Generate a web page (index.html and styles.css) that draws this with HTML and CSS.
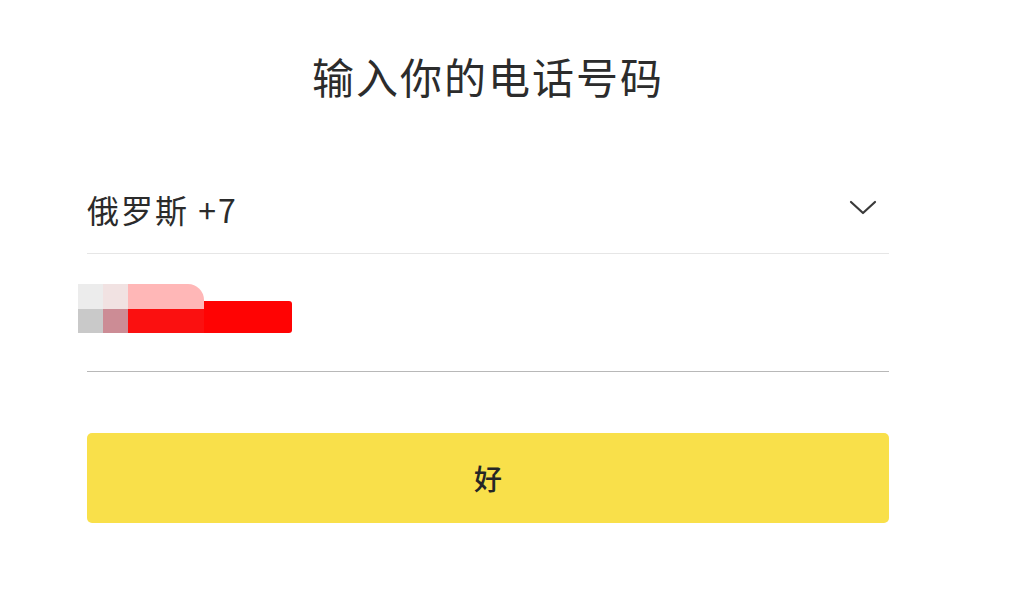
FILE: index.html
```html
<!DOCTYPE html>
<html lang="zh-CN">
<head>
<meta charset="utf-8">
<title>输入你的电话号码</title>
<link rel="stylesheet" href="styles.css">
</head>
<body>
<main class="form">
  <h1 class="title">输入你的电话号码</h1>
  <div class="country-row">
    <span class="country">俄罗斯 +7</span>
    <svg class="chevron" width="28" height="16" viewBox="0 0 28 16" aria-hidden="true">
      <polyline points="2,2 14,13 26,2" fill="none" stroke="#3a3a3a" stroke-width="2.2" stroke-linecap="round" stroke-linejoin="round"/>
    </svg>
  </div>
  <div class="phone-row">
    <div class="redact">
      <div class="px px-a"><i class="t"></i><i class="b"></i></div>
      <div class="px px-b"><i class="t"></i><i class="b"></i></div>
      <div class="px px-c"><i class="t"></i><i class="b"></i></div>
      <div class="px-d"></div>
    </div>
  </div>
  <button class="ok">好</button>
</main>
</body>
</html>
```

FILE: styles.css
```css
html, body {
  margin: 0;
  padding: 0;
  background: #ffffff;
}
body {
  font-family: "Noto Sans CJK SC", "Noto Sans", sans-serif;
  color: #2e2e2e;
}
.form {
  width: 802px;
  margin-left: 87px;
  display: flex;
  flex-direction: column;
}
.title {
  margin: 53px 0 0;
  font-size: 42px;
  line-height: 46px;
  font-weight: 400;
  text-align: center;
  color: #2c2c2c;
  letter-spacing: 2px;
}
.country-row {
  margin-top: 92px;
  display: flex;
  align-items: center;
  justify-content: space-between;
  padding: 0 12px 26px 0;
  border-bottom: 1px solid #e6e6e6;
}
.country {
  font-size: 32px;
  line-height: 36px;
  letter-spacing: 2px;
  color: #2b2b2b;
}
.chevron {
  display: block;
  margin-top: -3px;
}
.phone-row {
  padding: 30px 0 38px;
  border-bottom: 1.5px solid #b8b8b8;
}
.redact {
  display: flex;
  align-items: flex-start;
  margin-left: -9px;
  height: 49px;
}
.px {
  display: flex;
  flex-direction: column;
  height: 49px;
}
.px i {
  display: block;
}
.px .t { height: 25px; }
.px .b { height: 24px; }
.px-a { width: 25px; }
.px-a .t { background: #ececec; }
.px-a .b { background: #c9c9c9; }
.px-b { width: 25px; }
.px-b .t { background: #f1e2e2; }
.px-b .b { background: #cc8c95; }
.px-c { width: 76px; }
.px-c .t { background: #ffb7b7; border-top-right-radius: 16px; }
.px-c .b { background: #fb1010; }
.px-d {
  width: 88px;
  height: 32px;
  margin-top: 17px;
  background: #ff0303;
  border-radius: 0 3px 3px 0;
}
.ok {
  margin-top: 61px;
  height: 90px;
  border: none;
  border-radius: 5px;
  background: #f9e04a;
  font-family: "Noto Sans CJK SC", sans-serif;
  font-size: 28px;
  font-weight: 500;
  color: #262626;
  padding: 0;
}
```
